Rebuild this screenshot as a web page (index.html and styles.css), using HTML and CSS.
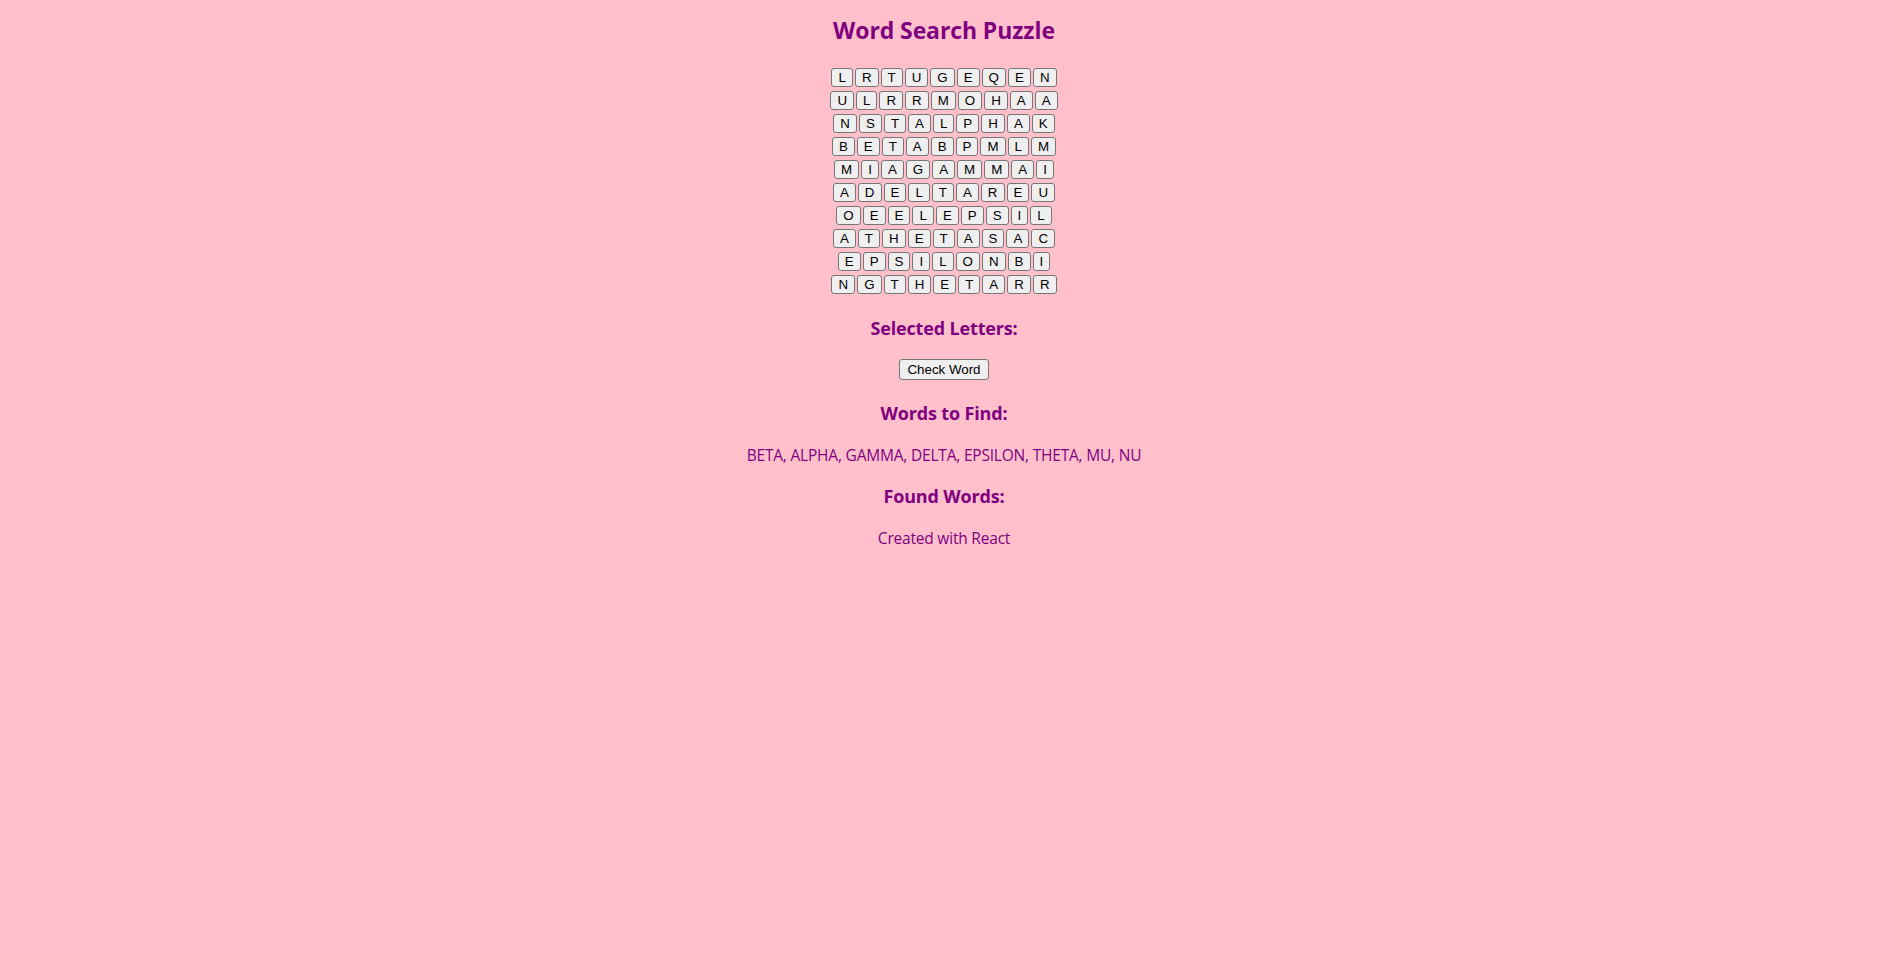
FILE: index.html
```html
<!DOCTYPE html>
<html lang="en">
<head>
<meta charset="utf-8">
<title>Word Search Puzzle</title>
<link rel="stylesheet" href="styles.css">
</head>
<body>
<div class="app">
  <h1 class="title">Word Search Puzzle</h1>
  <div class="grid">
    <div class="row"><button class="cell">L</button><button class="cell">R</button><button class="cell">T</button><button class="cell">U</button><button class="cell">G</button><button class="cell">E</button><button class="cell">Q</button><button class="cell">E</button><button class="cell">N</button></div>
    <div class="row"><button class="cell">U</button><button class="cell">L</button><button class="cell">R</button><button class="cell">R</button><button class="cell">M</button><button class="cell">O</button><button class="cell">H</button><button class="cell">A</button><button class="cell">A</button></div>
    <div class="row"><button class="cell">N</button><button class="cell">S</button><button class="cell">T</button><button class="cell">A</button><button class="cell">L</button><button class="cell">P</button><button class="cell">H</button><button class="cell">A</button><button class="cell">K</button></div>
    <div class="row"><button class="cell">B</button><button class="cell">E</button><button class="cell">T</button><button class="cell">A</button><button class="cell">B</button><button class="cell">P</button><button class="cell">M</button><button class="cell">L</button><button class="cell">M</button></div>
    <div class="row"><button class="cell">M</button><button class="cell">I</button><button class="cell">A</button><button class="cell">G</button><button class="cell">A</button><button class="cell">M</button><button class="cell">M</button><button class="cell">A</button><button class="cell">I</button></div>
    <div class="row"><button class="cell">A</button><button class="cell">D</button><button class="cell">E</button><button class="cell">L</button><button class="cell">T</button><button class="cell">A</button><button class="cell">R</button><button class="cell">E</button><button class="cell">U</button></div>
    <div class="row"><button class="cell">O</button><button class="cell">E</button><button class="cell">E</button><button class="cell">L</button><button class="cell">E</button><button class="cell">P</button><button class="cell">S</button><button class="cell">I</button><button class="cell">L</button></div>
    <div class="row"><button class="cell">A</button><button class="cell">T</button><button class="cell">H</button><button class="cell">E</button><button class="cell">T</button><button class="cell">A</button><button class="cell">S</button><button class="cell">A</button><button class="cell">C</button></div>
    <div class="row"><button class="cell">E</button><button class="cell">P</button><button class="cell">S</button><button class="cell">I</button><button class="cell">L</button><button class="cell">O</button><button class="cell">N</button><button class="cell">B</button><button class="cell">I</button></div>
    <div class="row"><button class="cell">N</button><button class="cell">G</button><button class="cell">T</button><button class="cell">H</button><button class="cell">E</button><button class="cell">T</button><button class="cell">A</button><button class="cell">R</button><button class="cell">R</button></div>
  </div>
  <h3 class="section-title selected-title">Selected Letters:</h3>
  <button class="check">Check Word</button>
  <h3 class="section-title find-title">Words to Find:</h3>
  <p class="text words">BETA, ALPHA, GAMMA, DELTA, EPSILON, THETA, MU, NU</p>
  <h3 class="section-title found-title">Found Words:</h3>
  <p class="text credit">Created with React</p>
</div>
</body>
</html>
```

FILE: styles.css
```css
html, body {
  margin: 0;
  padding: 0;
  background: #ffc0cb;
}

body {
  font-family: "Open Sans", "Noto Sans", sans-serif;
  color: #800080;
}

.app {
  display: flex;
  flex-direction: column;
  align-items: center;
  padding: 14px 6px 0 0;
  text-align: center;
}

.title {
  margin: 0;
  font-size: 23px;
  line-height: 32px;
  font-weight: 700;
  letter-spacing: -0.1px;
}

.grid {
  margin-top: 20px;
  display: flex;
  flex-direction: column;
  align-items: center;
}

.row {
  height: 23px;
  display: flex;
  align-items: center;
  justify-content: center;
}

.cell {
  appearance: none;
  margin: 0 1px;
  height: 19px;
  padding: 0 6px;
  border: 1px solid #767676;
  border-radius: 3px;
  background: #efefef;
  color: #000;
  font-family: "Liberation Sans", Arial, sans-serif;
  font-size: 13.333px;
  line-height: 17px;
}

.section-title {
  margin: 0;
  font-size: 18px;
  line-height: 26px;
  font-weight: 700;
  letter-spacing: -0.15px;
}

.selected-title { margin-top: 19px; }

.check {
  appearance: none;
  margin-top: 18px;
  height: 21px;
  padding: 0 7px;
  border: 1px solid #767676;
  border-radius: 3px;
  background: #efefef;
  color: #000;
  font-family: "Liberation Sans", Arial, sans-serif;
  font-size: 13.333px;
  line-height: 19px;
}

.find-title { margin-top: 20px; }
.found-title { margin-top: 17px; }

.text {
  margin: 18px 0 0;
  font-size: 15.5px;
  line-height: 22px;
  letter-spacing: -0.2px;
}
```
